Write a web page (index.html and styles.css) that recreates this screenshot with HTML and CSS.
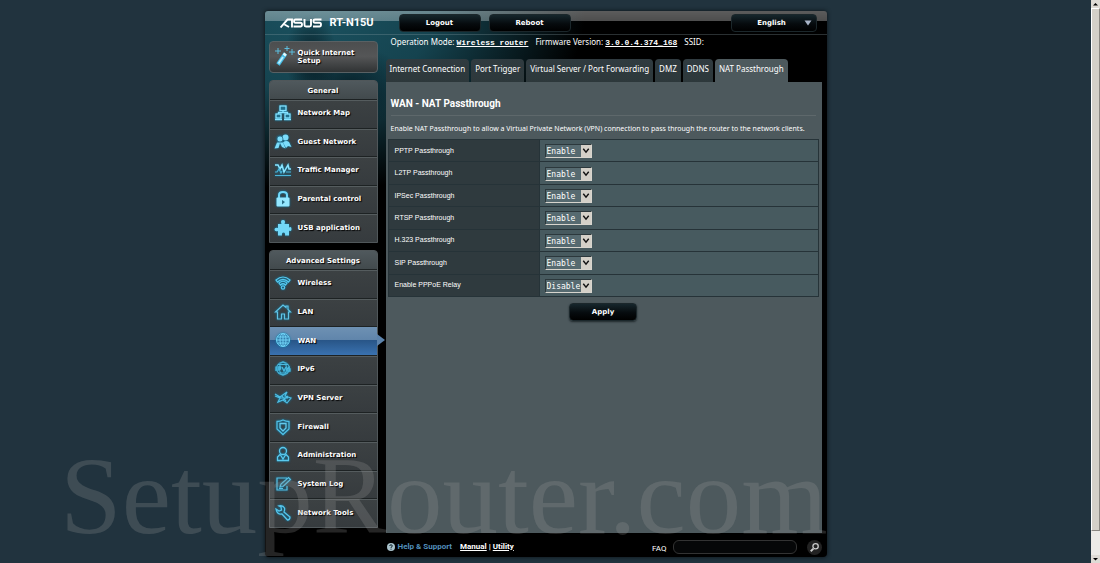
FILE: index.html
```html
<!DOCTYPE html>
<html lang="en">
<head>
<meta charset="utf-8">
<title>ASUS RT-N15U - NAT Passthrough</title>
<link rel="stylesheet" href="styles.css">
</head>
<body>
<svg class="sprites" aria-hidden="true">
  <symbol id="chev" viewBox="0 0 9 11"><path d="M2 3.5L4.500 6.500L7 3.500" fill="none" stroke="#111" stroke-width="1.300"/></symbol>
</svg>
<div class="page">
  <div class="router">
    <header class="top">
      <svg class="logo" viewBox="0 0 42 10" role="img" aria-label="ASUS">
        <g fill="none" stroke="#fff" stroke-width="1.900">
          <path d="M0.500 9.500L7.500 1.500H12V9.500M4.500 6.500L9 9"/>
          <path d="M22 1.500H15.500Q14 1.500 14 3Q14 4.800 15.500 4.800H20.500Q22 4.800 22 6.500Q22 8.500 20.500 8.500H13.500"/>
          <path d="M24.500 1V7Q24.500 8.500 26 8.500H29.500Q31 8.500 31 7V1"/>
          <path d="M41.500 1.500H35Q33.500 1.500 33.500 3Q33.500 4.800 35 4.800H39.500Q41 4.800 41 6.500Q41 8.500 39.500 8.500H33"/>
        </g>
      </svg>
      <span class="model">RT-N15U</span>
      <button class="topbtn" type="button">Logout</button>
      <button class="topbtn" type="button">Reboot</button>
      <span class="lang">
        <select aria-label="Language"><option>English</option></select>
        <svg viewBox="0 0 8 6" aria-hidden="true"><path d="M0.500 0.500H7.500L4 5.500Z" fill="#a9b4c8"/></svg>
      </span>
    </header>
    <div class="cols">
      <nav class="side">
        <a class="quick" href="#">
          <svg viewBox="0 0 22 22"><path d="M4 18.500L11.500 7.500" stroke="#48bfe9" stroke-width="4"/><path d="M4.500 17.500L9 11" stroke="#b8efff" stroke-width="2"/><path d="M10 9.500L11.500 7.500" stroke="#e8fcff" stroke-width="3"/><path d="M4 2V8M1 5H7M13 0V5M10.500 2.500H15.500M18 3V9M15 6H21" stroke="#5dbddd" stroke-width="1"/></svg>
          <span>Quick Internet Setup</span>
        </a>
        <section class="menu">
          <h2>General</h2>
          <ul class="general">
            <li><a href="#"><svg viewBox="0 0 18 18"><g fill="#1f6f8c" stroke="#84e2ff" stroke-width="1.300"><rect x="6" y="2" width="6" height="4.500"/><rect x="2" y="10" width="5" height="4"/><rect x="11" y="10" width="5" height="4"/><path d="M9 7V8.500M4.500 10V8.500H13.500V10M1 15.500H8M10 15.500H17" fill="none"/></g></svg>Network Map</a></li>
            <li><a href="#"><svg viewBox="0 0 18 18"><g fill="#7bdcfb"><circle cx="11.500" cy="4.500" r="3"/><path d="M9 9.500Q12 7 15 9L17.500 14L14 13L12 15Z"/><circle cx="6" cy="6" r="3" stroke="#246078" stroke-width=".7"/><path d="M0.500 15.500L3 9.500H9L11.500 15.500L8 14L6 10L4.500 15Z"/></g></svg>Guest Network</a></li>
            <li><a href="#"><svg viewBox="0 0 18 18"><path d="M1 4H4L6 8L8 4L10 11L14 4L15 8H17" fill="none" stroke="#8be5ff" stroke-width="1.500"/><path d="M1 11H3L5 8L7 12L8 10M12 11H17M1 14.500H17" fill="none" stroke="#4bb6db" stroke-width="1.200"/></svg>Traffic Manager</a></li>
            <li><a href="#"><svg viewBox="0 0 18 18"><path d="M5 8V5Q5 2 9 2Q13 2 13 5V8" fill="none" stroke="#70d8fa" stroke-width="2"/><rect x="2.500" y="7.500" width="13" height="9" rx="1" fill="#94e7ff"/><path d="M8 10L11 12L8 14.500Z" fill="#286d87"/></svg>Parental control</a></li>
            <li><a href="#"><svg viewBox="0 0 18 18"><path d="M4 5H7.500Q6 1 9 1T10.500 5H15V8.500Q17.500 7 17.500 10T15 11.500V16.500H11Q11.500 13.500 9.500 13.500T8 16.500H4V12Q0.500 13 0.500 10.500T4 9Z" fill="#73d8f8"/></svg>USB application</a></li>
          </ul>
        </section>
        <section class="menu">
          <h2>Advanced Settings</h2>
          <ul class="advanced">
            <li><a href="#"><svg viewBox="0 0 18 18"><g fill="none" stroke="#55c8ee" stroke-width="1.200"><path d="M2 6Q9 0 16 6L14.500 8Q9 3 3.500 8ZM5 9Q9 5.500 13 9L11.500 11Q9 8.500 6.500 11Z"/><circle cx="9" cy="13.500" r="1.700"/></g></svg>Wireless</a></li>
            <li><a href="#"><svg viewBox="0 0 18 18"><path d="M3.500 9H1.500L9 2L12 4.500V3H14V6.500L16.500 9H14.500V16H10.500V11H7.500V16H3.500Z" fill="none" stroke="#60c4e6" stroke-width="1.200"/></svg>LAN</a></li>
            <li class="on"><a href="#" aria-current="page"><svg viewBox="0 0 18 18"><g fill="#327eae" stroke="#70d2f5"><circle cx="9" cy="8" r="6.500"/><ellipse cx="9" cy="8" rx="3" ry="6.500"/><path d="M2.500 8H15.500M3.500 5H14.500M3.500 11H14.500M9 1.500V14.500"/></g></svg>WAN</a></li>
            <li><a href="#"><svg viewBox="0 0 18 18"><g fill="none" stroke="#4bb9de"><circle cx="9" cy="8.500" r="6.500"/><ellipse cx="9" cy="8.500" rx="3.500" ry="6.500"/><path d="M4 4.500H14M4 13H14"/><path d="M2 6.500V11M4 11V7H6.500V9H4M8 7L10 11L12 7M15.500 6.500L13 9V11H16V9H13" stroke-width="1.300"/></g></svg>IPv6</a></li>
            <li><a href="#"><svg viewBox="0 0 18 18"><path d="M1 5L6 8L13 3L11 7L17 9L13 14L9 11L4 13L6 9L1 7M6 9L14 9M9 11L14 7M8 7L12 12" fill="none" stroke="#4fbee3" stroke-width="1.200"/></svg>VPN Server</a></li>
            <li><a href="#"><svg viewBox="0 0 18 18"><path d="M3 3.500Q6 3.500 9 2Q12 3.500 15 3.500V11L9 16.500L3 11Z" fill="none" stroke="#50bfe6" stroke-width="1.300"/><path d="M6 5.500H12V10L9 13L6 10Z" fill="none" stroke="#62c8ec" stroke-width="1.300"/></svg>Firewall</a></li>
            <li><a href="#"><svg viewBox="0 0 18 18"><g fill="none" stroke="#5ac9ee" stroke-width="1.300"><circle cx="9" cy="5" r="3.500"/><path d="M6.500 8L3.500 11V14.500H14.500V11L11.500 8M6.500 9L9 13L11.500 9"/></g></svg>Administration</a></li>
            <li><a href="#"><svg viewBox="0 0 18 18"><path d="M13 3H3V15H13V11M6 12L7 9L14.500 2.500L16.500 4.500L9 11.500ZM5 13.500H9" fill="none" stroke="#59c0e3" stroke-width="1.200"/></svg>System Log</a></li>
            <li><a href="#"><svg viewBox="0 0 18 18"><path d="M2 5L5 7L7.500 6L7 3L5 2Q9 1 10.500 4Q11 6 10 8L16 13Q16 16 13.500 16L8 10Q3 11 2 5Z" fill="none" stroke="#57c5eb" stroke-width="1.300"/></svg>Network Tools</a></li>
          </ul>
        </section>
      </nav>
      <main class="main">
        <p class="info"><span>Operation Mode: <a href="#">Wireless router</a></span><span>Firmware Version: <a href="#">3.0.0.4.374_168</a></span><span>SSID:</span></p>
        <nav class="tabs">
          <a href="#">Internet Connection</a><a href="#">Port Trigger</a><a href="#">Virtual Server / Port Forwarding</a><a href="#">DMZ</a><a href="#">DDNS</a><a class="cur" href="#" aria-current="page">NAT Passthrough</a>
        </nav>
        <form class="panel">
          <h1>WAN - NAT Passthrough</h1>
          <p class="desc">Enable NAT Passthrough to allow a Virtual Private Network (VPN) connection to pass through the router to the network clients.</p>
          <table>
            <tr><th><label for="s1">PPTP Passthrough</label></th><td><span class="sel"><select id="s1"><option>Enable</option><option>Disable</option></select><svg><use href="#chev"/></svg></span></td></tr>
            <tr><th><label for="s2">L2TP Passthrough</label></th><td><span class="sel"><select id="s2"><option>Enable</option><option>Disable</option></select><svg><use href="#chev"/></svg></span></td></tr>
            <tr><th><label for="s3">IPSec Passthrough</label></th><td><span class="sel"><select id="s3"><option>Enable</option><option>Disable</option></select><svg><use href="#chev"/></svg></span></td></tr>
            <tr><th><label for="s4">RTSP Passthrough</label></th><td><span class="sel"><select id="s4"><option>Enable</option><option>Disable</option></select><svg><use href="#chev"/></svg></span></td></tr>
            <tr><th><label for="s5">H.323 Passthrough</label></th><td><span class="sel"><select id="s5"><option>Enable</option><option>Disable</option></select><svg><use href="#chev"/></svg></span></td></tr>
            <tr><th><label for="s6">SIP Passthrough</label></th><td><span class="sel"><select id="s6"><option>Enable</option><option>Disable</option></select><svg><use href="#chev"/></svg></span></td></tr>
            <tr><th><label for="s7">Enable PPPoE Relay</label></th><td><span class="sel"><select id="s7"><option>Disable</option><option>Enable</option></select><svg><use href="#chev"/></svg></span></td></tr>
          </table>
          <button class="apply" type="button">Apply</button>
        </form>
        <footer class="foot">
          <svg class="help" viewBox="0 0 8 8" aria-hidden="true"><circle cx="4" cy="4" r="4" fill="#a9c2cb"/><path d="M2.700 3Q2.700 1.800 4 1.800T5.300 3Q5.300 3.800 4 4.400V5M4 5.700V6.700" fill="none" stroke="#10242c" stroke-width="1"/></svg>
          <span class="support">Help &amp; Support</span>
          <span class="links"><a href="#">Manual</a> | <a href="#">Utility</a></span>
          <label for="faq">FAQ</label>
          <input id="faq" type="text">
          <button class="search" type="button" aria-label="Search"><svg viewBox="0 0 14 14"><circle cx="8" cy="5.800" r="2.500" fill="none" stroke="#ccc" stroke-width="1.200"/><path d="M6 8L3.500 10.500" stroke="#ccc" stroke-width="1.800"/></svg></button>
        </footer>
      </main>
    </div>
  </div>
</div>
<div class="bar" aria-hidden="true">
  <svg viewBox="0 0 9 8"><path d="M2 5.500H7L4.500 3Z" fill="#000"/></svg>
  <div class="thumb"></div>
  <svg viewBox="0 0 9 8"><path d="M2 3H7L4.500 5.500Z" fill="#000"/></svg>
</div>
<div class="mark">SetupRouter.com</div>
</body>
</html>
```
FILE: styles.css
```css
* { box-sizing: border-box; }
body {
  margin: 0;
  height: 100vh;
  overflow: hidden;
  display: flex;
  background: #21333e;
  color: #fff;
  font: 8px/10px Roboto, Arial, sans-serif;
}
a { color: inherit; text-decoration: none; }
h1, h2, p, ul { margin: 0; padding: 0; }
ul { list-style: none; }
button, select, input { margin: 0; color: inherit; }
.sprites { position: absolute; width: 0; height: 0; }
.page { flex: 1; padding: 11px 8px 6px; display: flex; justify-content: center; }
.router {
  width: 100%;
  max-width: 562px;
  display: flex;
  flex-direction: column;
  border-radius: 3px 3px 4px 4px;
  box-shadow: 0 0 4px #0a1014;
  background:
    linear-gradient(rgba(255, 255, 255, .36), rgba(255, 255, 255, .3)) 0 0 / 100% 10px no-repeat,
    radial-gradient(ellipse 26px 44px at 46px 46px, rgba(0, 12, 18, .65), transparent),
    radial-gradient(ellipse 60px 40px at 85px 75px, rgba(0, 12, 18, .6), transparent),
    radial-gradient(ellipse 270px 180px at 50px 0, #1b5260, #15434f 45%, transparent),
    #000;
}
.top {
  height: 24px;
  display: flex;
  align-items: center;
  padding: 0 10px 0 15px;
  border-bottom: 1px solid rgba(140, 160, 165, .3);
}
.logo { width: 42px; height: 10px; }
.model { flex: none; width: 77px; padding: 1px 0 0 8px; font: bold 11px/14px Roboto, Arial, sans-serif; }
.topbtn, .lang, .apply {
  font: bold 7px/10px "DejaVu Sans", Verdana, sans-serif;
  border: 1px solid #1b272b;
  border-radius: 4px;
  background: linear-gradient(#16262c, #060b0e 55%, #000);
}
.topbtn { width: 82px; height: 18px; margin-right: 8px; padding: 0; }
.lang { display: flex; align-items: center; width: 86px; height: 18px; margin-left: auto; padding: 0 4px 0 8px; }
.lang select { flex: 1; appearance: none; border: 0; background: none; font: inherit; text-align: center; text-align-last: center; padding: 0; }
.lang svg { width: 8px; height: 6px; }
.cols { flex: 1; display: flex; gap: 8px; padding: 0 5px 0 4px; }
.side { flex: none; width: 109px; padding-top: 6px; display: flex; flex-direction: column; gap: 7px; font: bold 7px/8px "DejaVu Sans", Verdana, sans-serif; text-shadow: 1px 1px 1px #000; }
.quick { display: flex; align-items: center; gap: 2px; height: 32px; padding: 0 12px 0 4px; border: 1px solid #596164; border-radius: 4px; background: linear-gradient(#4c4e4f, #555657 48%, #303334); }
.quick svg { flex: none; width: 22px; height: 22px; }
.menu { border: 1px solid #50575a; border-radius: 4px 4px 0 0; background: #3a3f42; }
.menu h2 { height: 18px; font: inherit; line-height: 20px; text-align: center; border-radius: 3px 3px 0 0; background: linear-gradient(#50595d, #424a4d); }
.menu ul { display: grid; grid-auto-rows: 1fr; }
.general { height: 143px; }
.advanced { height: 258px; }
.menu li { position: relative; border-top: 1px solid #1d2223; box-shadow: inset 0 1px #555c5e; background: linear-gradient(#3c4143, #363b3e); }
.menu a { display: flex; align-items: center; gap: 6px; height: 100%; padding: 0 0 1px 4px; }
.menu svg { width: 18px; height: 18px; filter: drop-shadow(0 0 1px #087eab); }
.menu .on { background: linear-gradient(#6e91b3, #6085ab 46%, #285587 47%, #3a72b0); box-shadow: none; }
.menu .on::after { content: ""; position: absolute; left: 100%; top: 7px; border: solid transparent; border-width: 6px 0 6px 8px; border-left-color: #5c83ac; }
.main { flex: 1; min-width: 0; display: flex; flex-direction: column; }
.info { display: flex; gap: 7px; padding: 2px 5px 11px; font: 8px/10px "Noto Sans", Tahoma, sans-serif; white-space: nowrap; }
.info a { font: bold 8px/10px "Liberation Mono", "Courier New", monospace; text-decoration: underline; }
.tabs { display: flex; gap: 2px; font: 8px/10px "Noto Sans", Tahoma, sans-serif; white-space: nowrap; }
.tabs a { height: 23px; padding: 5px 4px; border-radius: 4px 4px 0 0; background: linear-gradient(#303b40, #2d383b); }
.tabs .cur { background: #4d595d; }
.panel { flex: 1; padding: 15px 3px 0 2px; background: #4d595d; display: flex; flex-direction: column; }
h1 { margin: 0 3px; padding-bottom: 4px; font: bold 10px/14px Roboto, Arial, sans-serif; border-bottom: 1px solid #5e686b; }
.desc { margin: 8px 3px 5px; font: 7px/10px "Noto Sans", Arial, sans-serif; white-space: nowrap; }
table { width: 100%; height: 158px; border-collapse: collapse; border: 1px solid #192225; background: #475a5f; }
th, td { padding: 0 5px; border: 1px solid #263338; text-align: left; font-weight: normal; }
th { width: 151px; padding-left: 6px; background: #2f3a3e; font: 7px/10px "Liberation Sans", Arial, sans-serif; }
.sel { display: flex; width: 47px; height: 14px; margin-top: 1px; border: 1px solid; border-color: #2c383c #d8d5ce #d8d5ce #2c383c; }
.sel select { flex: 1; min-width: 0; appearance: none; overflow: visible; border: 0; border-radius: 0; padding: 1px 0 0 1px; background: #566a70; font: 8px/11px "DejaVu Sans Mono", monospace; }
.sel svg { flex: none; width: 10px; height: 12px; background: #d4d0c8; }
.apply { align-self: center; width: 68px; height: 18px; margin-top: 6px; padding: 0; box-shadow: 0 1px 2px #20292c; }
.foot { height: 24px; display: flex; align-items: center; padding: 4px 0 0 1px; }
.help { width: 8px; height: 8px; }
.support { margin: 0 8px 0 3px; color: #528fbb; font-weight: bold; }
.links { font-weight: bold; }
.links a { text-decoration: underline; }
.foot label { margin-left: auto; padding-top: 3px; }
.foot input { width: 124px; height: 14px; margin: 0 10px 0 6px; border: 1px solid #333; border-radius: 6px; background: #060708; }
.search { width: 15px; height: 15px; padding: 0; border: 0; border-radius: 50%; background: #222; }
.search svg { display: block; width: 15px; height: 15px; }
.bar { width: 9px; display: flex; flex-direction: column; background: #ecebe7; }
.bar svg { height: 8px; background: #dedbd5; }
.thumb { flex: 1; margin-bottom: 24px; border: 1px solid; border-color: #fff #8b8882 #8b8882 #fff; background: #d4d0c8; }
.mark { position: absolute; left: 60px; bottom: 7px; font: 111px/120px "Liberation Serif", "Times New Roman", serif; color: rgba(160, 160, 160, .23); pointer-events: none; white-space: nowrap; }
```
